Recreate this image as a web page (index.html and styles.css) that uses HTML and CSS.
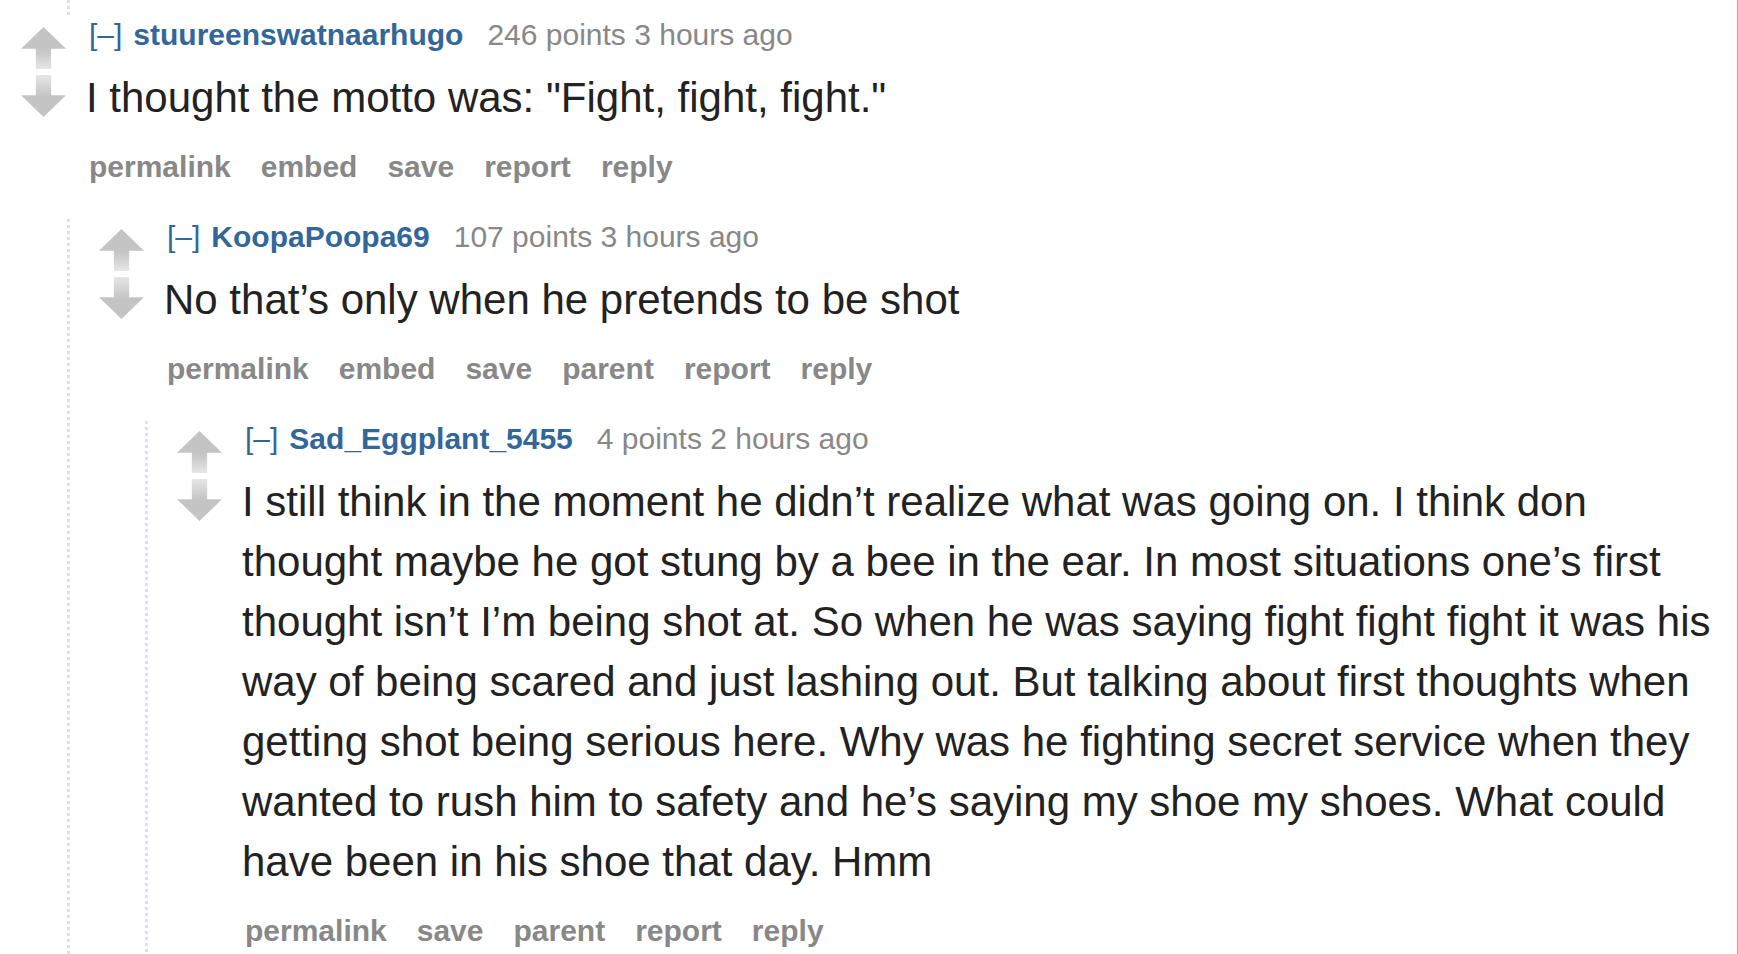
FILE: index.html
```html
<!DOCTYPE html>
<html lang="en">
<head>
    <meta charset="UTF-8">
    <meta name="viewport" content="width=device-width, initial-scale=1.0">
    <title>comments</title>
    <link rel="stylesheet" href="styles.css">
</head>
<body>
    <div class="page">
        <!-- tail of the previous thread -->
        <div class="thread-tail"></div>

        <div class="comment">
            <div class="entry-row">
                <div class="midcol">
                    <div class="arrow up"></div>
                    <div class="arrow down"></div>
                </div>
                <div class="entry">
                    <p class="tagline"><a class="expand">[–]</a><a class="author">stuureenswatnaarhugo</a><span class="score">246 points 3 hours ago</span></p>
                    <div class="md"><p>I thought the motto was: "Fight, fight, fight."</p></div>
                    <ul class="buttons">
                        <li>permalink</li>
                        <li>embed</li>
                        <li>save</li>
                        <li>report</li>
                        <li>reply</li>
                    </ul>
                </div>
            </div>

            <div class="child">
                <div class="comment">
                    <div class="entry-row">
                        <div class="midcol">
                            <div class="arrow up"></div>
                            <div class="arrow down"></div>
                        </div>
                        <div class="entry">
                            <p class="tagline"><a class="expand">[–]</a><a class="author">KoopaPoopa69</a><span class="score">107 points 3 hours ago</span></p>
                            <div class="md"><p>No that’s only when he pretends to be shot</p></div>
                            <ul class="buttons">
                                <li>permalink</li>
                                <li>embed</li>
                                <li>save</li>
                                <li>parent</li>
                                <li>report</li>
                                <li>reply</li>
                            </ul>
                        </div>
                    </div>

                    <div class="child">
                        <div class="comment">
                            <div class="entry-row">
                                <div class="midcol">
                                    <div class="arrow up"></div>
                                    <div class="arrow down"></div>
                                </div>
                                <div class="entry">
                                    <p class="tagline"><a class="expand">[–]</a><a class="author">Sad_Eggplant_5455</a><span class="score">4 points 2 hours ago</span></p>
                                    <div class="md"><p>I still think in the moment he didn’t realize what was going on. I think don thought maybe he got stung by a bee in the ear. In most situations one’s first thought isn’t I’m being shot at. So when he was saying fight fight fight it was his way of being scared and just lashing out. But talking about first thoughts when getting shot being serious here. Why was he fighting secret service when they wanted to rush him to safety and he’s saying my shoe my shoes. What could have been in his shoe that day. Hmm</p></div>
                                    <ul class="buttons">
                                        <li>permalink</li>
                                        <li>save</li>
                                        <li>parent</li>
                                        <li>report</li>
                                        <li>reply</li>
                                    </ul>
                                </div>
                            </div>
                        </div>
                    </div>
                </div>
            </div>
        </div>
    </div>
</body>
</html>
```

FILE: styles.css
```css
html, body {
    margin: 0;
    overflow: hidden;
    background-color: #fff;
}
body {
    font-family: "Liberation Sans", Arial, sans-serif;
    color: #222;
}
.page {
    box-sizing: border-box;
    min-height: 100vh;
    border-right: 1px solid #ee82ee;
    padding: 0 8px 0 21px;
}
.thread-tail, .child {
    background-image: linear-gradient(#ddf 50%, transparent 50%);
    background-size: 3px 6px;
    background-repeat: repeat-y;
}
.thread-tail {
    height: 17px;
    margin-left: 46px;
}
.child {
    margin-left: 46px;
    padding-left: 32px;
}
.entry-row {
    display: flex;
}
.midcol {
    flex: none;
    width: 45px;
    padding-top: 10px;
    display: flex;
    flex-direction: column;
    gap: 6px;
}
.arrow {
    width: 45px;
    height: 42px;
}
.arrow.up {
    background: linear-gradient(#c4c4c4 0%, #c4c4c4 52%, #cbcbcb 64%, #e6e6e6 100%);
    clip-path: polygon(50% 0, 100% 52%, 67% 52%, 67% 100%, 33% 100%, 33% 52%, 0 52%);
}
.arrow.down {
    background: linear-gradient(to top, #c4c4c4 0%, #c4c4c4 48%, #cbcbcb 60%, #e6e6e6 100%);
    clip-path: polygon(33% 0, 67% 0, 67% 48%, 100% 48%, 50% 100%, 0 48%, 33% 48%);
}
.entry {
    flex: 1;
    min-width: 0;
    margin-left: 20px;
}
.tagline {
    margin: 0;
    padding-left: 3px;
    font-size: 30px;
    line-height: 36px;
    color: #888;
}
.expand {
    color: #369;
    margin-right: 11px;
}
.author {
    color: #369;
    font-weight: bold;
    margin-right: 24px;
}
.md p {
    margin: 15px 0 0;
    font-size: 42px;
    line-height: 60px;
    color: #222;
}
.buttons {
    list-style: none;
    margin: 21px 0 34px;
    padding: 0 0 0 3px;
    display: flex;
    gap: 30px;
    font-size: 30px;
    line-height: 36px;
    font-weight: bold;
    color: #888;
}
```
